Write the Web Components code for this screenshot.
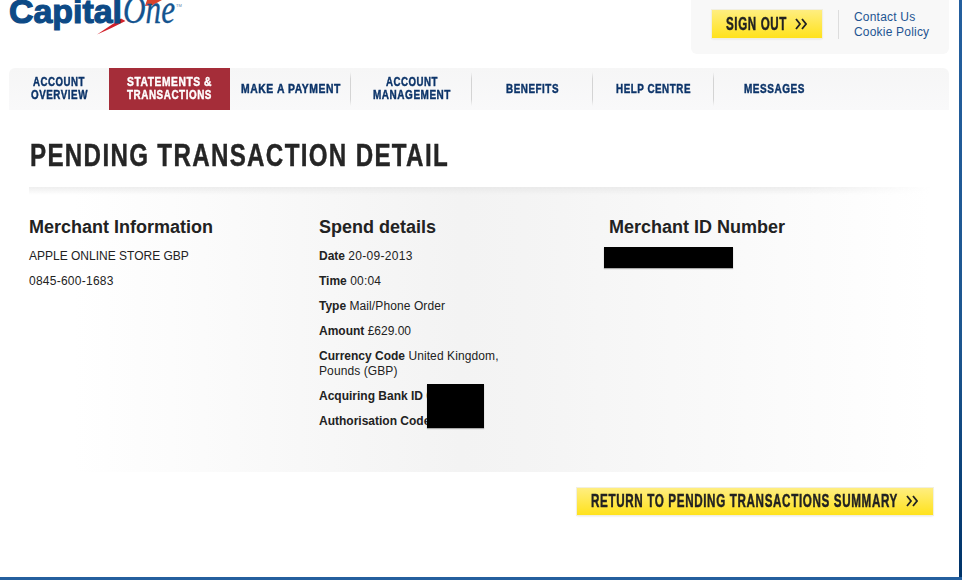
<!DOCTYPE html>
<html lang="en">
<head>
<meta charset="utf-8">
<title>Pending Transaction Detail</title>
<style>
html, body { margin: 0; padding: 0; }
html { background: linear-gradient(#245f9e, #1d568f 60%, #00346a 99%); }
body { font-family: "Liberation Sans", Arial, sans-serif; overflow: hidden; }
</style>
</head>
<body>
<page-frame>
	<page-header></page-header>
	<main-nav>
		<nav-item class="first"><narrow-text w="52">ACCOUNT</narrow-text><narrow-text w="57">OVERVIEW</narrow-text></nav-item>
		<nav-item active><narrow-text w="85">STATEMENTS &amp;</narrow-text><narrow-text w="85">TRANSACTIONS</narrow-text></nav-item>
		<nav-item><narrow-text w="100">MAKE A PAYMENT</narrow-text></nav-item>
		<nav-item><narrow-text w="52">ACCOUNT</narrow-text><narrow-text w="78">MANAGEMENT</narrow-text></nav-item>
		<nav-item><narrow-text w="53">BENEFITS</narrow-text></nav-item>
		<nav-item><narrow-text w="75">HELP CENTRE</narrow-text></nav-item>
		<nav-item class="last"><narrow-text w="61">MESSAGES</narrow-text></nav-item>
	</main-nav>
	<page-title><narrow-text w="419">PENDING TRANSACTION DETAIL</narrow-text></page-title>
	<detail-panel>
		<detail-col heading="Merchant Information">
			<detail-row>APPLE ONLINE STORE GBP</detail-row>
			<detail-row><span style="letter-spacing:.25px">0845-600-1683</span></detail-row>
		</detail-col>
		<detail-col heading="Spend details">
			<detail-row><b>Date</b> <span style="letter-spacing:.3px">20-09-2013</span></detail-row>
			<detail-row><b>Time</b> <span style="letter-spacing:.2px">00:04</span></detail-row>
			<detail-row><b>Type</b> <span style="letter-spacing:.1px">Mail/Phone Order</span></detail-row>
			<detail-row><b>Amount</b> £629.00</detail-row>
			<detail-row><b>Currency Code</b> <span style="letter-spacing:.1px">United Kingdom, Pounds (GBP)</span></detail-row>
			<detail-row><b>Acquiring Bank ID</b> 0</detail-row>
			<detail-row><b>Authorisation Code</b></detail-row>
			<redact-box style="left:108px;top:197px;width:57px;height:44px"></redact-box>
		</detail-col>
		<detail-col heading="Merchant ID Number">
			<redact-box style="left:-5px;top:60px;width:129px;height:21px"></redact-box>
		</detail-col>
	</detail-panel>
	<page-actions>
		<cta-button><narrow-text w="307">RETURN TO PENDING TRANSACTIONS SUMMARY</narrow-text></cta-button>
	</page-actions>
</page-frame>

<template id="cta-template">
	<style>
	:host {
		display: inline-flex;
		align-items: center;
		box-sizing: border-box;
		height: 27px;
		padding: 0 15px 1px 14px;
		gap: 8px;
		background: linear-gradient(#ffee80, #ffe21c);
		box-shadow: 0 0 0 1px #f1efe0, 0 1px 2px #ddd;
		color: #222;
		font: bold 17.5px/20px "Liberation Sans", sans-serif;
		white-space: nowrap;
	}
	svg { display: block; }
	</style>
	<slot></slot>
	<svg width="12" height="12" viewBox="0 0 12 12" fill="none" stroke="#222" stroke-width="1.8">
		<path d="M1 1l4 5-4 5"></path>
		<path d="M7 1l4 5-4 5"></path>
	</svg>
</template>

<script>
(function() {
	class PageFrame extends HTMLElement {
		constructor() {
			super();
			this.attachShadow({mode: "open"}).innerHTML = `
				<style>
				:host {
					display: flex;
					flex-direction: column;
					box-sizing: border-box;
					width: 959px;
					height: 577px;
					background: #fff;
					overflow: hidden;
				}
				</style>
				<slot></slot>
			`;
		}
	}

	class PageHeader extends HTMLElement {
		constructor() {
			super();
			this.attachShadow({mode: "open"}).innerHTML = `
				<style>
				:host {
					display: flex;
					justify-content: space-between;
					height: 68px;
					padding: 0 10px 0 9px;
					flex: none;
				}
				.logo { display: block; }
				.util {
					display: flex;
					align-items: flex-start;
					box-sizing: border-box;
					width: 258px;
					height: 54px;
					padding: 10px 0 0 21px;
					background: #f8f8f8;
					border-radius: 0 0 6px 6px;
				}
				.links {
					margin-left: 16px;
					padding: 0 0 0 15px;
					height: 29px;
					border-left: 1px solid #ddd;
					font-size: 12px;
					letter-spacing: .2px;
					line-height: 15px;
					color: #1d5492;
				}
				.links div { white-space: nowrap; }
				</style>
				<svg class="logo" width="180" height="38" viewBox="0 0 180 38">
					<path d="M88 34.5L112 18.5l4.5 2.5C107 26 98 30 88 34.5z" fill="#d3202a"></path>
					<path d="M138 0h15l-9 5-8 1z" fill="#d9432c"></path>
					<text x="0" y="23" font-family="Liberation Sans" font-weight="bold" font-size="34" fill="#0d4a86" stroke="#0d4a86" stroke-width="1.2" textLength="113" lengthAdjust="spacingAndGlyphs">Capital</text>
					<text x="114" y="23" font-family="Liberation Serif" font-style="italic" font-size="40" fill="#14548f" stroke="#14548f" stroke-width=".3" textLength="52" lengthAdjust="spacingAndGlyphs">One</text>
					<text x="167" y="7" font-family="Liberation Sans" font-size="4" fill="#5a83aa">TM</text>
				</svg>
				<div class="util">
					<cta-button style="height:28px"><narrow-text w="61">SIGN OUT</narrow-text></cta-button>
					<div class="links"><div>Contact Us</div><div>Cookie Policy</div></div>
				</div>
			`;
		}
	}

	class MainNav extends HTMLElement {
		constructor() {
			super();
			this.attachShadow({mode: "open"}).innerHTML = `
				<style>
				:host {
					display: grid;
					grid-template-columns: 100px repeat(6, 121px) 1fr;
					flex: none;
					height: 42px;
					margin: 0 10px 0 9px;
					background: linear-gradient(#f6f6f6, #f9f9fa);
					border-radius: 6px 6px 0 0;
				}
				</style>
				<slot></slot>
			`;
		}
	}

	class NavItem extends HTMLElement {
		constructor() {
			super();
			this.attachShadow({mode: "open"}).innerHTML = `
				<style>
				:host {
					display: flex;
					flex-direction: column;
					align-items: center;
					justify-content: center;
					box-sizing: border-box;
					padding-bottom: 2px;
					position: relative;
					color: #0c3469;
					font: bold 13px/13px "Liberation Sans", sans-serif;
				}
				:host([active]) { background: #a52d39; color: #fff; }
				:host::after {
					content: "";
					position: absolute;
					right: 0;
					top: 4px;
					bottom: 4px;
					width: 1px;
					background: linear-gradient(transparent, #d4d4d4 20%, #d4d4d4 80%, transparent);
				}
				:host([active])::after, :host(.first)::after, :host(.last)::after { display: none; }
				</style>
				<slot></slot>
			`;
		}
	}

	class PageTitle extends HTMLElement {
		constructor() {
			super();
			this.attachShadow({mode: "open"}).innerHTML = `
				<style>
				:host {
					display: block;
					flex: none;
					height: 77px;
					padding: 26px 0 0 30px;
					box-sizing: border-box;
					color: #252525;
					font: bold 32px/38px "Liberation Sans", sans-serif;
				}
				</style>
				<slot></slot>
			`;
		}
	}

	class DetailPanel extends HTMLElement {
		constructor() {
			super();
			this.attachShadow({mode: "open"}).innerHTML = `
				<style>
				:host {
					display: grid;
					grid-template-columns: repeat(3, 290px);
					align-items: start;
					flex: none;
					box-sizing: border-box;
					height: 285px;
					margin: 0 29px;
					background: linear-gradient(90deg, #fff 5%, #f3f3f3 48%, #f4f4f4 55%, #fff 100%);
					position: relative;
				}
				:host::before {
					content: "";
					position: absolute;
					left: 0; right: 0; top: 0;
					height: 8px;
					background: linear-gradient(rgba(225,225,225,.55), rgba(255,255,255,0));
					-webkit-mask-image: linear-gradient(90deg, #000 85%, transparent);
					mask-image: linear-gradient(90deg, #000 85%, transparent);
				}
				</style>
				<slot></slot>
			`;
		}
	}

	class DetailCol extends HTMLElement {
		constructor() {
			super();
			let heading = this.getAttribute("heading");
			this.attachShadow({mode: "open"}).innerHTML = `
				<style>
				:host {
					display: block;
					position: relative;
					padding-top: 29px;
				}
				h2 {
					margin: 0 0 11px;
					color: #222;
					font: bold 18px/22px "Liberation Sans", sans-serif;
				}
				</style>
				<h2>${heading}</h2>
				<slot></slot>
			`;
		}
	}

	class DetailRow extends HTMLElement {
		constructor() {
			super();
			this.attachShadow({mode: "open"}).innerHTML = `
				<style>
				:host {
					display: block;
					width: 190px;
					margin-bottom: 10px;
					color: #222;
					font: 12px/15px "Liberation Sans", sans-serif;
				}
				</style>
				<slot></slot>
			`;
		}
	}

	class RedactBox extends HTMLElement {
		constructor() {
			super();
			this.attachShadow({mode: "open"}).innerHTML = `
				<style>
				:host {
					display: block;
					position: absolute;
					background: #000;
					box-shadow: 0 1px 1px #aaa;
				}
				</style>
			`;
		}
	}

	class PageActions extends HTMLElement {
		constructor() {
			super();
			this.attachShadow({mode: "open"}).innerHTML = `
				<style>
				:host {
					display: flex;
					justify-content: flex-end;
					flex: none;
					padding: 16px 26px 0 0;
				}
				</style>
				<slot></slot>
			`;
		}
	}

	class CtaButton extends HTMLElement {
		constructor() {
			super();
			let template = document.getElementById("cta-template");
			this.attachShadow({mode: "open"}).appendChild(template.content.cloneNode(true));
		}
	}

	// no condensed face is installed: squeeze the bold sans to the width given in w
	class NarrowText extends HTMLElement {
		constructor() {
			super();
			this.attachShadow({mode: "open"}).innerHTML = `
				<style>
				:host { display: block; flex: none; }
				span {
					display: inline-block;
					white-space: nowrap;
					letter-spacing: .055em;
					-webkit-text-stroke: .45px currentColor;
					transform-origin: 0 50%;
				}
				</style>
				<span><slot></slot></span>
			`;
		}

		connectedCallback() {
			let target = parseFloat(this.getAttribute("w"));
			let span = this.shadowRoot.querySelector("span");
			let natural = span.getBoundingClientRect().width;
			this.style.width = target + "px";
			span.style.transform = "scaleX(" + (target / natural) + ")";
		}
	}

	customElements.define("cta-button", CtaButton);
	customElements.define("page-frame", PageFrame);
	customElements.define("page-header", PageHeader);
	customElements.define("main-nav", MainNav);
	customElements.define("nav-item", NavItem);
	customElements.define("page-title", PageTitle);
	customElements.define("detail-panel", DetailPanel);
	customElements.define("detail-col", DetailCol);
	customElements.define("detail-row", DetailRow);
	customElements.define("redact-box", RedactBox);
	customElements.define("page-actions", PageActions);
	customElements.define("narrow-text", NarrowText);
})();
</script>
</body>
</html>
